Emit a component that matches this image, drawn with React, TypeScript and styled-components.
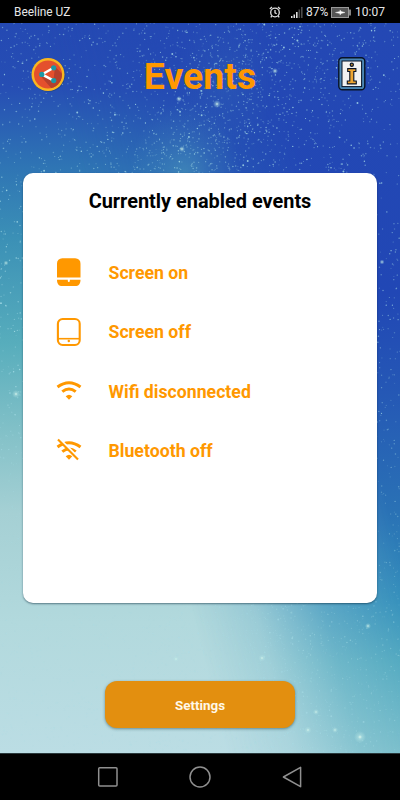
import React from "react";
import styled, { createGlobalStyle } from "styled-components";

const GlobalStyle = createGlobalStyle`
  * { box-sizing: border-box; }
  body { margin: 0; background: #000; font-family: Roboto, "Liberation Sans", sans-serif; }
  svg { display: block; flex: none; }
`;

const Phone = styled.div`
  width: 400px;
  height: 800px;
  display: flex;
  flex-direction: column;
  overflow: hidden;
  background: #000;
`;

const StatusBar = styled.header`
  height: 23px;
  flex: none;
  display: flex;
  align-items: center;
  justify-content: space-between;
  padding: 1px 16px 0 14px;
  color: #e6e6e6;
  font-size: 12px;
  line-height: 20px;
`;

const StatusGroup = styled.div`
  display: flex;
  align-items: center;
`;

const CarrierName = styled.span`
  font-size: 11.9px;
`;

const StatusText = styled.span<{ $width: number }>`
  width: ${(p) => p.$width}px;
  white-space: nowrap;
`;

const Gap = styled.span<{ $size: number }>`
  width: ${(p) => p.$size}px;
`;

const Screen = styled.main`
  position: relative;
  isolation: isolate;
  height: 730px;
  flex: none;
  display: flex;
  flex-direction: column;
  align-items: center;
  background: linear-gradient(180deg, #2449b3 0, #264eb4 65px, #2a60b4 100px, #2e73b4 140px, #3b90b6 215px, #57adbc 320px, #83c1c8 410px, #a5d0d4 490px, #b2d9dd 600px, #bbdde4 730px);
`;

const NightSide = styled.div`
  position: absolute;
  inset: 0;
  z-index: -2;
  background: linear-gradient(180deg, #2448b4 0, #2147b5 270px, #2558b5 370px, #2a72b5 490px, #338fbb 580px, #4ca6be 640px, #6fb9c7 730px);
  mask-image: linear-gradient(76deg, transparent 39%, rgba(0, 0, 0, 0.2) 50%, rgba(0, 0, 0, 0.68) 62%, #000 77%);
`;

const StarField = styled.svg`
  position: absolute;
  inset: 0;
  z-index: -1;
`;

const TitleBar = styled.div`
  width: 100%;
  height: 102px;
  padding: 0 34px 0 31px;
  display: flex;
  align-items: center;
  justify-content: space-between;
`;

const Title = styled.h1`
  margin: 4px 4px 0 0;
  color: #ff9800;
  font-size: 37.4px;
  line-height: 44px;
  font-weight: 700;
`;

const IconButton = styled.button`
  padding: 0;
  border: 0;
  background: none;
`;

const Card = styled.section`
  width: 354px;
  height: 430px;
  margin-top: 48px;
  padding-top: 15px;
  border-radius: 10px;
  background: #fff;
  box-shadow: 0 1px 2px rgba(0, 30, 50, 0.5);
`;

const CardTitle = styled.h2`
  margin: 0 0 28px;
  color: #000;
  font-size: 19.9px;
  line-height: 27px;
  font-weight: 700;
  text-align: center;
`;

const EventList = styled.ul`
  margin: 0;
  padding: 0 0 0 32px;
  list-style: none;
`;

const EventRow = styled.li`
  height: 59.5px;
  display: flex;
  align-items: center;
  gap: 25.5px;
  color: #ff9800;
  font-size: 17.7px;
  font-weight: 700;

  svg {
    margin-top: -1px;
  }
`;

const SettingsButton = styled.button`
  width: 190px;
  height: 47px;
  margin-top: 78px;
  padding: 1px 0 0;
  border: 0;
  border-radius: 12px;
  background: #e38f0f;
  color: #fff8e8;
  font: 700 13.4px Roboto, sans-serif;
  box-shadow: 0 1px 3px rgba(20, 60, 70, 0.5);
`;

const NavBar = styled.nav`
  flex: 1;
  display: flex;
  justify-content: center;
  align-items: center;
  gap: 68px;
  border-top: 1px solid #29383b;
`;

/* Deterministic generator, so the sky is the same on each render. */
const createRandom = (seed: number) => () => {
  seed = (seed + 0x6d2b79f5) >>> 0;
  let t = seed;
  t = Math.imul(t ^ (t >>> 15), t | 1);
  t ^= t + Math.imul(t ^ (t >>> 7), t | 61);
  return ((t ^ (t >>> 14)) >>> 0) / 4294967296;
};

const random = createRandom(4217);
const milkyWay = (y: number) => (y < 150 ? 265 - y * 0.5 : 112 + y * 0.2);

const stars = Array.from({ length: 9000 }, (_, i) => {
  const y = random() * 730;
  const clustered = i % 5 < 2;
  const spread = (random() + random() + random() - 1.5) * 105;
  const x = clustered ? milkyWay(y) + spread : random() * 400;
  const bright = random();
  const paleArea = y > 450 && x < 250;
  return {
    x,
    y,
    r: bright > 0.99 ? 0.95 : 0.5 + random() * 0.3,
    o: (bright > 0.93 ? 0.8 : 0.2 + random() * 0.4) * (paleArea ? 0.45 : y > 450 ? 0.65 : 1),
  };
});

const glows = [
  [360, 714, 6], [16, 371, 4], [217, 81, 4], [179, 76, 3], [182, 126, 3],
  [262, 635, 3.5], [176, 636, 3], [368, 603, 3], [308, 707, 3.5], [335, 707, 3],
  [316, 689, 3], [6, 240, 2.5], [382, 239, 2.5], [275, 48, 3],
];

const Sky = () => (
  <StarField width="400" height="730" viewBox="0 0 400 730" aria-hidden="true">
    <defs>
      <radialGradient id="haze">
        <stop offset="0" stopColor="#51a5bb" stopOpacity=".5" />
        <stop offset=".5" stopColor="#51a5bb" stopOpacity=".2" />
        <stop offset="1" stopColor="#51a5bb" stopOpacity="0" />
      </radialGradient>
      <radialGradient id="glow">
        <stop offset="0" stopColor="#e4faee" stopOpacity="1" />
        <stop offset=".35" stopColor="#b8e6e5" stopOpacity=".5" />
        <stop offset="1" stopColor="#b8e6e5" stopOpacity="0" />
      </radialGradient>
    </defs>
    <ellipse cx="185" cy="150" rx="55" ry="70" fill="url(#haze)" />
    <ellipse cx="225" cy="60" rx="50" ry="70" fill="url(#haze)" opacity=".25" />
    {stars.map((s, i) => (
      <circle key={i} cx={s.x} cy={s.y} r={s.r} fill="#a9dfe8" opacity={s.o} />
    ))}
    {glows.map(([x, y, r]) => (
      <circle key={`${x}-${y}`} cx={x} cy={y} r={r} fill="url(#glow)" />
    ))}
  </StarField>
);

const AlarmIcon = () => (
  <svg width="12" height="12" viewBox="0 0 12 12" fill="none" stroke="#e0e0e0" strokeWidth="1.3">
    <circle cx="6" cy="6.5" r="4.3" />
    <path d="M6 4v2.8l1.7.9M.8 3 3 1M11.2 3 9 1M2.8 10l-1 1.3M9.2 10l1 1.3" />
  </svg>
);

const SignalIcon = () => (
  <svg width="12" height="11" viewBox="0 0 12 11">
    <path fill="#e0e0e0" d="M0 9h1.5v2H0zM2.5 7.5H4V11H2.5zM5 5h1.6v6H5z" />
    <path fill="#4b4b4b" d="M7.5 2.5h1.6V11H7.5zM10 0h1.6v11H10z" />
  </svg>
);

const BatteryIcon = () => (
  <svg width="20" height="11" viewBox="0 0 20 11">
    <rect x=".5" y=".5" width="17" height="10" fill="#555" stroke="#999" />
    <path d="M19 2.5v6" stroke="#ddd" strokeWidth="1.2" />
    <path d="M4.5 5.5 9 4.4V2.9l1 1.5 4 1.1-4 1.1-1 1.5V6.6z" fill="#fff" stroke="#fff" strokeWidth=".4" />
  </svg>
);

const ShareIcon = () => (
  <svg width="35" height="36" viewBox="0 0 35 36">
    <defs>
      <clipPath id="share-disc"><circle cx="17" cy="18.5" r="14" /></clipPath>
    </defs>
    <circle cx="17.6" cy="19.1" r="16.7" fill="#173d72" opacity=".55" />
    <circle cx="17" cy="18.5" r="16.5" fill="#f9b620" />
    <circle cx="17" cy="18.5" r="14" fill="#e4502d" />
    <path d="M24 10.500 40 27v15H29L9.500 20l13 4z" fill="#b5402c" clipPath="url(#share-disc)" />
    <path d="M22.2 12 11 18.4l11.2 6" fill="none" stroke="#fff" strokeWidth="2.4" />
    <g fill="#1c98a5">
      <circle cx="22.7" cy="11.8" r="2.6" />
      <circle cx="10.8" cy="18.4" r="2.6" />
      <circle cx="22.7" cy="24.6" r="2.6" />
    </g>
  </svg>
);

const InfoIcon = () => (
  <svg width="28" height="34" viewBox="0 0 28 34" stroke="#081225">
    <rect x=".8" y=".8" width="26" height="32" rx="3.5" fill="#4a86b4" strokeWidth="1.4" />
    <rect x="4" y="4" width="19.6" height="25.6" fill="#f2f2f2" strokeWidth="1" />
    <circle cx="13.8" cy="7.8" r="1.6" fill="#b48430" strokeWidth="1.2" />
    <path d="M9.7 11.6h8.2v2.9h-2.1V24h2.500v2.900H9.300V24h2.500v-9.500H9.700z" fill="#eda532" strokeWidth="1.1" />
  </svg>
);

const ScreenOnIcon = () => (
  <svg width="28" height="30" viewBox="0 0 28 30" fill="#ff9800">
    <path d="M2 20.5V6.8a5.3 5.3 0 0 1 5.3-5.6h12.9a5.3 5.3 0 0 1 5.3 5.6v13.7z" />
    <path d="M2 22.7h10.8v1.2a1 1 0 0 0 2 0v-1.2h10.7c0 3.9-1.8 6.4-5.3 6.4H7.3C3.8 29.1 2 26.6 2 22.7z" />
  </svg>
);

const ScreenOffIcon = () => (
  <svg width="28" height="30" viewBox="0 0 28 30" fill="none" stroke="#ff9800">
    <rect x="2.9" y="2" width="21.8" height="26" rx="4.7" strokeWidth="2.1" />
    <path d="M3 21.7h21.500" strokeWidth="1.6" />
    <circle cx="13.8" cy="24" r="1.2" fill="#ff9800" stroke="none" />
  </svg>
);

const WifiWaves = () => (
  <>
    <path d="M2.500 11Q14 2.400 25.500 11M7.300 15.700q6.700-5.400 13.400 0" fill="none" stroke="#ff9800" strokeWidth="3" />
    <path d="M10.700 20.200q3.300-3 6.600 0L14 23.700z" fill="#ff9800" />
  </>
);

const WifiIcon = () => (
  <svg width="28" height="30" viewBox="0 0 28 30">
    <WifiWaves />
  </svg>
);

const WifiOffIcon = () => (
  <svg width="28" height="30" viewBox="0 0 28 30">
    <WifiWaves />
    <path d="M5 3.200 25.300 23.500" stroke="#fff" strokeWidth="2.2" />
    <path d="M3 3.500 23 23.500" stroke="#ff9800" strokeWidth="2.200" />
  </svg>
);

const events = [
  { label: "Screen on", Icon: ScreenOnIcon },
  { label: "Screen off", Icon: ScreenOffIcon },
  { label: "Wifi disconnected", Icon: WifiIcon },
  { label: "Bluetooth off", Icon: WifiOffIcon },
];

const NavIcon = styled.svg.attrs({ width: 24, height: 24, viewBox: "0 0 24 24" })`
  fill: none;
  stroke: #909090;
  stroke-width: 1.5px;
  stroke-linejoin: round;
`;

export default function App() {
  return (
    <Phone>
      <GlobalStyle />
      <StatusBar>
        <CarrierName>Beeline UZ</CarrierName>
        <StatusGroup>
          <AlarmIcon />
          <Gap $size={10} />
          <SignalIcon />
          <Gap $size={3} />
          <StatusText $width={25}>87%</StatusText>
          <BatteryIcon />
          <Gap $size={4} />
          <StatusText $width={29}>10:07</StatusText>
        </StatusGroup>
      </StatusBar>
      <Screen>
        <NightSide />
        <Sky />
        <TitleBar>
          <IconButton aria-label="Share"><ShareIcon /></IconButton>
          <Title>Events</Title>
          <IconButton aria-label="Information"><InfoIcon /></IconButton>
        </TitleBar>
        <Card>
          <CardTitle>Currently enabled events</CardTitle>
          <EventList>
            {events.map(({ label, Icon }) => (
              <EventRow key={label}>
                <Icon />
                <span>{label}</span>
              </EventRow>
            ))}
          </EventList>
        </Card>
        <SettingsButton>Settings</SettingsButton>
      </Screen>
      <NavBar>
        <NavIcon><rect x="2.7" y="2.7" width="18.3" height="18.3" rx="1" /></NavIcon>
        <NavIcon><circle cx="12" cy="12" r="10" /></NavIcon>
        <NavIcon><path d="M20.6 2.3v19.4L3.4 12z" /></NavIcon>
      </NavBar>
    </Phone>
  );
}
